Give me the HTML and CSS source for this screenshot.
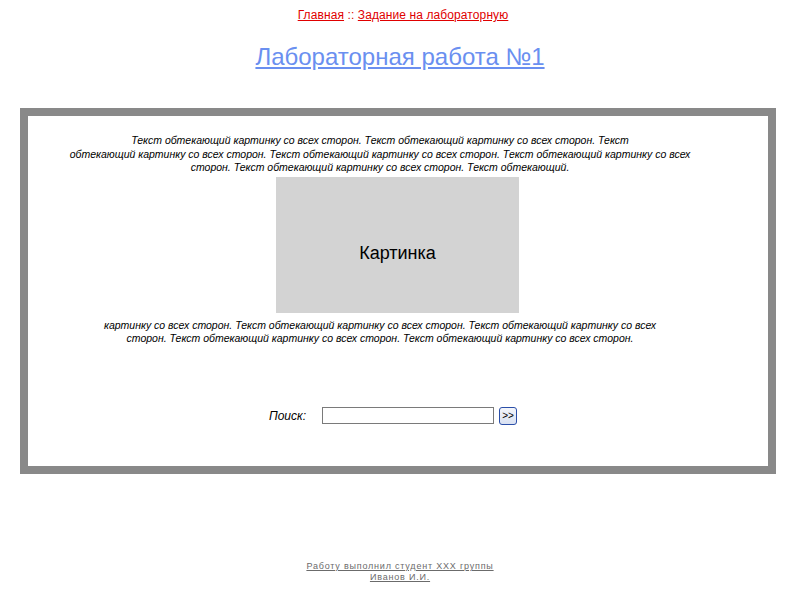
FILE: index.html
```html
<!DOCTYPE html>
<html lang="ru">
<head>
<meta charset="utf-8">
<title>Лабораторная работа №1</title>
<link rel="stylesheet" href="styles.css">
</head>
<body>
<div class="nav"><a href="#">Главная</a> :: <a href="#">Задание на лабораторную</a></div>
<h1 class="title"><a href="#">Лабораторная работа №1</a></h1>
<div class="box">
  <p class="text">Текст обтекающий картинку со всех сторон. Текст обтекающий картинку со всех сторон. Текст<br>обтекающий картинку со всех сторон. Текст обтекающий картинку со всех сторон. Текст обтекающий картинку со всех<br>сторон. Текст обтекающий картинку со всех сторон. Текст обтекающий.</p>
  <div class="picture">Картинка</div>
  <p class="text">картинку со всех сторон. Текст обтекающий картинку со всех сторон. Текст обтекающий картинку со всех<br>сторон. Текст обтекающий картинку со всех сторон. Текст обтекающий картинку со всех сторон.</p>
  <form class="search">
    <label class="search-label">Поиск:</label>
    <input class="search-input" type="text">
    <button class="search-btn" type="button">&gt;&gt;</button>
  </form>
</div>
<div class="footer"><a href="#">Работу выполнил студент ХХХ группы</a><br><a href="#">Иванов И.И.</a></div>
</body>
</html>
```
FILE: styles.css
```css
html, body {
  margin: 0;
  padding: 0;
  background: #fff;
}
body {
  font-family: "Liberation Sans", Arial, sans-serif;
  color: #000;
}
.nav {
  text-align: center;
  font-size: 12px;
  line-height: 14px;
  padding-top: 8px;
  padding-left: 6px;
  letter-spacing: 0.1px;
  color: #e00000;
}
.nav a {
  color: #e00000;
}
.title {
  margin: 21px 0 0 0;
  text-align: center;
  font-size: 24px;
  font-weight: normal;
  line-height: 28px;
}
.title a {
  color: #6a8ff0;
}
.box {
  margin: 37px 0 0 20px;
  width: 740px;
  height: 350px;
  border: 8px solid #898989;
  display: flex;
  flex-direction: column;
  align-items: center;
}
.text {
  margin: 0;
  width: 660px;
  padding-right: 36px;
  text-align: center;
  font-style: italic;
  font-size: 10.5px;
  line-height: 13.5px;
}
.box > .text:first-child {
  margin-top: 18px;
}
.picture {
  box-sizing: border-box;
  margin-top: 2px;
  margin-right: 1px;
  width: 243px;
  height: 136px;
  padding-top: 18px;
  background: #d3d3d3;
  display: flex;
  align-items: center;
  justify-content: center;
  font-size: 18px;
}
.picture + .text {
  margin-top: 6px;
}
.search {
  margin: 61px 10px 0 0;
  display: flex;
  align-items: center;
}
.search-label {
  font-style: italic;
  font-size: 12px;
  margin-right: 16px;
}
.search-input {
  box-sizing: border-box;
  width: 172px;
  height: 17px;
  border: 1px solid #7a7a7a;
  padding: 0 2px;
  margin: 0;
}
.search-btn {
  box-sizing: border-box;
  margin-left: 5px;
  width: 18px;
  height: 18px;
  padding: 0;
  border: 1px solid #2b4fa8;
  border-radius: 3px;
  background: linear-gradient(#f4f6fb, #d9e1f2);
  font-family: "Liberation Sans", Arial, sans-serif;
  font-size: 10px;
  line-height: 14px;
  color: #000;
}
.footer {
  margin-top: 87px;
  text-align: center;
  font-size: 9px;
  line-height: 11px;
  letter-spacing: 0.8px;
}
.footer a {
  color: #6b6b6b;
}
```
